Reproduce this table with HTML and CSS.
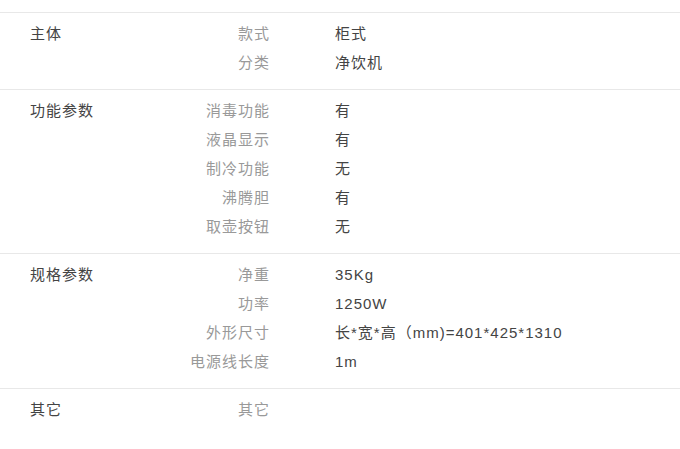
FILE: index.html
```html
<!DOCTYPE html>
<html lang="zh-CN">
<head>
    <meta charset="UTF-8">
    <meta name="viewport" content="width=device-width, initial-scale=1.0">
    <title>规格参数</title>
    <link rel="stylesheet" href="styles.css">
</head>
<body>
    <div class="params">
        <div class="group">
            <div class="group-name">主体</div>
            <dl class="rows">
                <dt>款式</dt><dd>柜式</dd>
                <dt>分类</dt><dd>净饮机</dd>
            </dl>
        </div>
        <div class="group">
            <div class="group-name">功能参数</div>
            <dl class="rows">
                <dt>消毒功能</dt><dd>有</dd>
                <dt>液晶显示</dt><dd>有</dd>
                <dt>制冷功能</dt><dd>无</dd>
                <dt>沸腾胆</dt><dd>有</dd>
                <dt>取壶按钮</dt><dd>无</dd>
            </dl>
        </div>
        <div class="group">
            <div class="group-name">规格参数</div>
            <dl class="rows">
                <dt>净重</dt><dd>35Kg</dd>
                <dt>功率</dt><dd>1250W</dd>
                <dt>外形尺寸</dt><dd>长*宽*高（mm)=401*425*1310</dd>
                <dt>电源线长度</dt><dd>1m</dd>
            </dl>
        </div>
        <div class="group">
            <div class="group-name">其它</div>
            <dl class="rows">
                <dt>其它</dt><dd></dd>
            </dl>
        </div>
    </div>
</body>
</html>
```

FILE: styles.css
```css
body {
    margin: 0;
    padding: 12px 0 0;
    background-color: #fff;
    font-family: 'Liberation Sans', 'Noto Sans CJK SC', sans-serif;
    font-size: 15px;
    letter-spacing: 1px;
    color: #333;
}
.group {
    display: flex;
    border-top: 1px solid #e8e8e8;
    padding: 6px 0 12px 30px;
}
.group-name {
    width: 140px;
    line-height: 29px;
    color: #444;
}
.rows {
    display: grid;
    grid-template-columns: 100px 1fr;
    column-gap: 65px;
    margin: 0;
    line-height: 29px;
}
.rows dt {
    text-align: right;
    color: #999;
}
.rows dd {
    margin: 0;
    color: #444;
}
```
